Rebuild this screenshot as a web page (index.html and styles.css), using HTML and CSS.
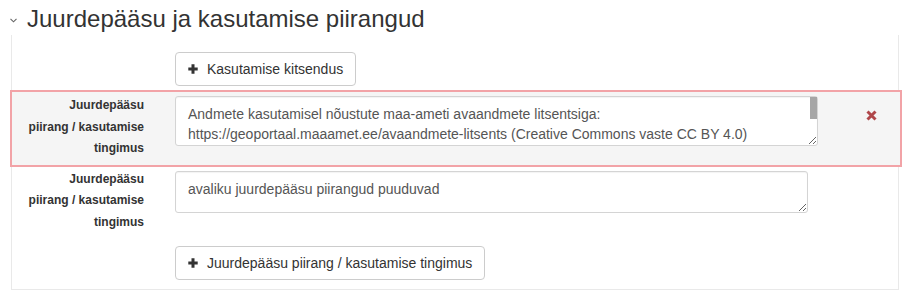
FILE: index.html
```html
<!doctype html>

<html lang="et">
<head>
    <meta charset="utf-8">
    <title>Juurdepääsu ja kasutamise piirangud</title>
    <link rel="stylesheet" href="styles.css">
</head>

<body>
<h3 class="section-title">
    <svg class="chevron" width="7" height="5" viewBox="0 0 7 5"><path d="M0.5 0.8 L3.5 3.8 L6.5 0.8" fill="none" stroke="#666" stroke-width="1.1"/></svg>
    Juurdepääsu ja kasutamise piirangud
</h3>
<div class="panel">
    <div class="form-row btn-row">
        <span></span>
        <div><button class="btn" type="button"><svg class="plus" width="10" height="10" viewBox="0 0 10 10"><path d="M3.5 0.3h3v3.2h3.2v3h-3.2v3.2h-3v-3.2h-3.2v-3h3.2z" fill="#333"/></svg>Kasutamise kitsendus</button></div>
    </div>
    <div class="form-row item has-error">
        <label class="label">Juurdepääsu piirang / kasutamise tingimus</label>
        <div class="scroll-wrap">
            <textarea class="form-control wide" rows="2">Andmete kasutamisel nõustute maa-ameti avaandmete litsentsiga:
https://geoportaal.maaamet.ee/avaandmete-litsents (Creative Commons vaste CC BY 4.0)</textarea>
            <span class="thumb"></span>
        </div>
        <span class="remove"><svg width="11" height="11" viewBox="0 0 11 11"><path d="M1.5 1.5 L9.5 9.5 M9.5 1.5 L1.5 9.5" stroke="#b0474a" stroke-width="3"/></svg></span>
    </div>
    <div class="form-row item">
        <label class="label">Juurdepääsu piirang / kasutamise tingimus</label>
        <textarea class="form-control narrow" rows="1">avaliku juurdepääsu piirangud puuduvad</textarea>
    </div>
    <div class="form-row btn-row last">
        <span></span>
        <div><button class="btn" type="button"><svg class="plus" width="10" height="10" viewBox="0 0 10 10"><path d="M3.5 0.3h3v3.2h3.2v3h-3.2v3.2h-3v-3.2h-3.2v-3h3.2z" fill="#333"/></svg>Juurdepääsu piirang / kasutamise tingimus</button></div>
    </div>
</div>
</body>
</html>
```

FILE: styles.css
```css
body {
    margin: 0;
    font-family: "Liberation Sans", Arial, sans-serif;
    font-size: 14px;
    color: #333;
    background: #fff;
}

.section-title {
    margin: 0;
    padding: 6px 0 0 10px;
    display: flex;
    align-items: center;
    font-size: 24px;
    font-weight: normal;
    line-height: 26px;
    color: #333;
}
.chevron {
    margin-right: 10px;
    margin-top: 2px;
}

.panel {
    margin: 3px 10px 0 11px;
    padding: 17px 0 9px;
    border: solid #e9e9e9 1px;
    border-top: none;
}

.form-row {
    display: grid;
    grid-template-columns: 132px 643px 1fr;
    column-gap: 31px;
}
.btn-row {
    margin-bottom: 4px;
}
.btn-row.last {
    margin-top: 8px;
    margin-bottom: 0;
}

.btn {
    display: inline-flex;
    align-items: center;
    height: 34px;
    padding: 6px 12px;
    font-family: inherit;
    font-size: 14px;
    line-height: 20px;
    color: #333;
    background: #fff;
    border: solid #ccc 1px;
    border-radius: 4px;
}
.plus {
    margin-right: 9px;
}

.item {
    padding: 2px 0 4px;
}
.item.has-error {
    margin: 0 -4px 0 -2px;
    padding: 3px 0 5px;
    border: solid #f2a3a7 2px;
    background-color: #f5f5f5;
}

.label {
    padding-left: 14px;
    font-size: 12px;
    font-weight: bold;
    line-height: 21.6px;
    text-align: right;
}

.form-control {
    display: block;
    margin-top: 1px;
    padding: 7px 12px 5px;
    font-family: inherit;
    font-size: 14px;
    line-height: 20px;
    color: #555;
    background: #fff;
    border: solid #d4d4d4 1px;
    border-radius: 3px;
    box-shadow: inset 0 1px 1px rgba(0, 0, 0, .05);
    box-sizing: border-box;
    resize: both;
    overflow: hidden;
}
.form-control.wide {
    width: 643px;
    height: 50px;
    padding-right: 20px;
}
.form-control.narrow {
    width: 633px;
    height: 42px;
    margin-top: 2px;
}

.scroll-wrap {
    position: relative;
}
.thumb {
    position: absolute;
    top: 2px;
    right: 1px;
    width: 7px;
    height: 22px;
    background: #a6a6a6;
}

.remove {
    margin: 13px 0 0 17px;
}
```
